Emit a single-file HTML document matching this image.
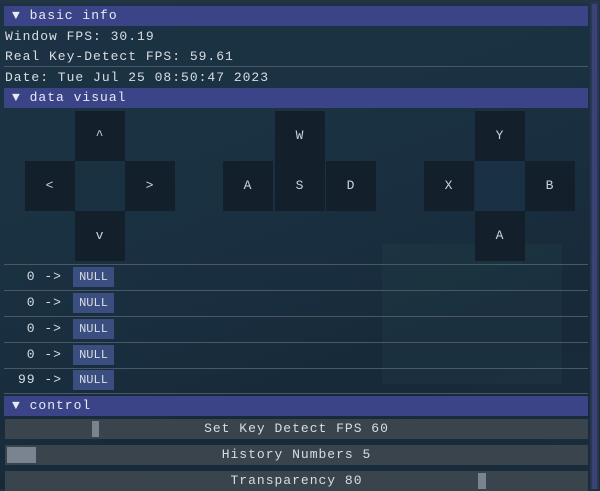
<!DOCTYPE html>
<html><head><style>
*{margin:0;padding:0;box-sizing:border-box}
body{width:600px;height:489px;overflow:hidden;position:relative;
background:linear-gradient(160deg,#1c3344 0%,#1a3142 40%,#172a3a 70%,#1a2c3c 100%);
font-family:"Liberation Mono","DejaVu Sans Mono",monospace;font-size:13px;letter-spacing:1px;color:#d8dde2}
.a{position:absolute}
.hdr{position:absolute;left:4px;width:584px;height:20px;background:#3c4488;line-height:20px;padding-left:8px;color:#e8eaf4}
.t{position:absolute;left:5px;line-height:20px;white-space:pre}
.sep{position:absolute;left:4px;width:584px;height:1px;background:#4a5866}
.c{position:absolute;width:50px;height:50px;background:#13202b;text-align:center;line-height:50px;color:#cdd3d9;font-size:13px}
.n{position:absolute;left:73px;width:41px;height:20px;background:#3a4f80;line-height:20px;text-align:center;font-size:12px;letter-spacing:0}
.num{position:absolute;width:62px;text-align:right;line-height:20px;white-space:pre}
.sl{position:absolute;left:5px;width:583px;height:20px;background:#3a444d;text-align:center;line-height:20px}
.g{position:absolute;background:#7a8490}
</style></head><body>
<div class="a" style="left:0;top:0;width:600px;height:3px;background:#243444"></div>
<div class="a" style="left:590px;top:2px;width:9px;height:487px;background:#2a3654"></div>
<div class="a" style="left:592px;top:4px;width:5px;height:485px;background:#3a4474"></div>
<div class="a" style="left:382px;top:244px;width:180px;height:140px;background:rgba(60,110,100,0.10)"></div>

<div class="hdr" style="top:6px">▼ basic info</div>
<div class="t" style="top:27px">Window FPS: 30.19</div>
<div class="t" style="top:47px">Real Key-Detect FPS: 59.61</div>
<div class="sep" style="top:66px"></div>
<div class="t" style="top:68px">Date: Tue Jul 25 08:50:47 2023</div>
<div class="hdr" style="top:88px">▼ data visual</div>

<div class="c" style="left:75px;top:111px">^</div>
<div class="c" style="left:25px;top:161px">&lt;</div>
<div class="c" style="left:75px;top:161px;background:#1a3142"></div>
<div class="c" style="left:125px;top:161px">&gt;</div>
<div class="c" style="left:75px;top:211px">v</div>

<div class="c" style="left:275px;top:111px">W</div>
<div class="c" style="left:223px;top:161px">A</div>
<div class="c" style="left:275px;top:161px">S</div>
<div class="c" style="left:326px;top:161px">D</div>

<div class="c" style="left:475px;top:111px">Y</div>
<div class="c" style="left:424px;top:161px">X</div>
<div class="c" style="left:475px;top:161px;background:#1a3044"></div>
<div class="c" style="left:525px;top:161px">B</div>
<div class="c" style="left:475px;top:211px">A</div>

<div class="sep" style="top:264px"></div>
<div class="num" style="left:0;top:267px">0 -&gt;</div><div class="n" style="top:267px">NULL</div>
<div class="sep" style="top:290px"></div>
<div class="num" style="left:0;top:293px">0 -&gt;</div><div class="n" style="top:293px">NULL</div>
<div class="sep" style="top:316px"></div>
<div class="num" style="left:0;top:319px">0 -&gt;</div><div class="n" style="top:319px">NULL</div>
<div class="sep" style="top:342px"></div>
<div class="num" style="left:0;top:345px">0 -&gt;</div><div class="n" style="top:345px">NULL</div>
<div class="sep" style="top:368px"></div>
<div class="num" style="left:0;top:370px">99 -&gt;</div><div class="n" style="top:370px">NULL</div>
<div class="sep" style="top:393px"></div>

<div class="hdr" style="top:396px">▼ control</div>
<div class="sl" style="top:419px">Set Key Detect FPS 60</div>
<div class="g" style="left:92px;top:421px;width:7px;height:16px"></div>
<div class="sl" style="top:445px">History Numbers 5</div>
<div class="g" style="left:7px;top:447px;width:29px;height:16px"></div>
<div class="sl" style="top:471px">Transparency 80</div>
<div class="g" style="left:478px;top:473px;width:8px;height:16px"></div>
</body></html>
